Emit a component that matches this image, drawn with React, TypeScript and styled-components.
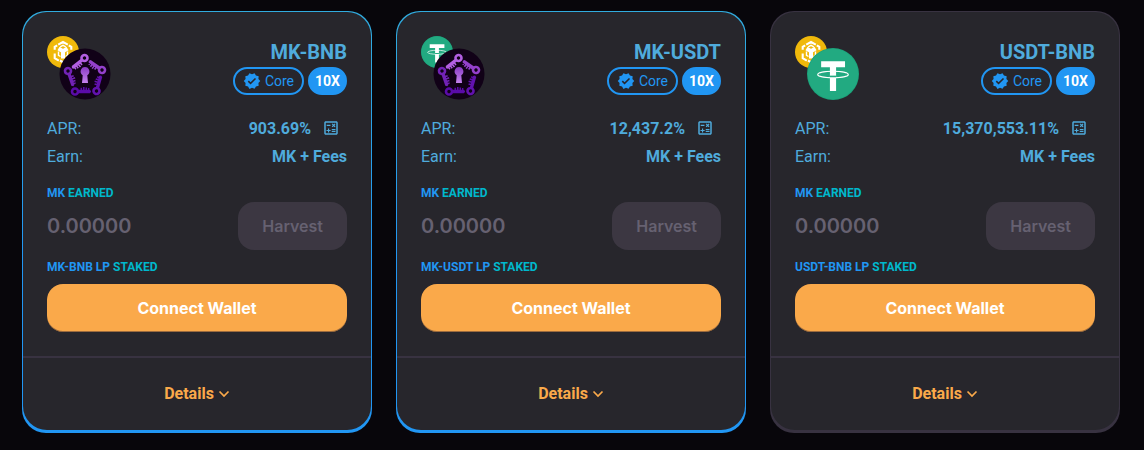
import React from "react";
import styled, { createGlobalStyle } from "styled-components";
import { MdVerified, MdOutlineCalculate } from "react-icons/md";

const GlobalStyle = createGlobalStyle`
  *, *::before, *::after { box-sizing: border-box; }
  body {
    margin: 0;
    background: #08060b;
    font-family: Roboto, "Noto Sans", sans-serif;
    font-size: 16px;
    line-height: 24px;
    color: #4fabdc;
  }
`;

const Grid = styled.main`
  display: grid;
  grid-template-columns: repeat(3, minmax(0, 1fr));
  gap: 24px;
  padding: 11px 24px 16px 22px;
`;

const CardFrame = styled.article<{ $highlight: boolean }>`
  padding: 1px 1px 3px;
  border-radius: 24px;
  background: ${(p) => (p.$highlight ? "linear-gradient(180deg, #31acdf, #2196f3 60%)" : "#383241")};
`;

const CardInner = styled.div`
  border-radius: 24px;
  background: #27262c;
`;

const CardBody = styled.div`
  padding: 24px;
`;

const Header = styled.header`
  display: flex;
  justify-content: space-between;
  align-items: center;
  height: 64px;
  margin-bottom: 16px;
`;

const TokenPair = styled.div`
  position: relative;
  width: 64px;
  height: 64px;
`;

const SecondaryToken = styled.svg`
  position: absolute;
  top: 0;
  left: 0;
  width: 32px;
  height: 32px;
`;

const PrimaryToken = styled.svg`
  position: absolute;
  right: 0;
  bottom: 0;
  width: 52px;
  height: 52px;
`;

const Titles = styled.div`
  display: flex;
  flex-direction: column;
  align-items: flex-end;
  gap: 4px;
`;

const PairName = styled.h2`
  margin: 0;
  font-size: 20px;
  line-height: 22px;
  font-weight: 700;
`;

const Tags = styled.div`
  display: flex;
  gap: 4px;
`;

const Tag = styled.span<{ $filled?: boolean }>`
  display: inline-flex;
  align-items: center;
  gap: 4px;
  height: 28px;
  padding: 0 ${(p) => (p.$filled ? 5 : 8)}px;
  border: 2px solid #2196f3;
  border-radius: 16px;
  background: ${(p) => (p.$filled ? "#2196f3" : "transparent")};
  color: ${(p) => (p.$filled ? "#ffffff" : "#2196f3")};
  font-size: 14px;
  font-weight: ${(p) => (p.$filled ? 700 : 400)};
`;

const Stats = styled.dl`
  display: grid;
  gap: 4px;
  margin: 0 0 16px;
`;

const Stat = styled.div`
  display: flex;
  justify-content: space-between;
  height: 24px;
  line-height: 26px;
`;

const StatName = styled.dt`
  margin: 0;
`;

const StatValue = styled.dd`
  display: flex;
  gap: 4px;
  margin: 0;
  font-weight: 700;
`;

const IconButton = styled.button`
  display: flex;
  align-items: center;
  justify-content: center;
  width: 32px;
  height: 24px;
  padding: 0;
  border: 0;
  background: none;
  color: inherit;
`;

const Caption = styled.p`
  margin: 0;
  font-size: 12px;
  line-height: 18px;
  font-weight: 700;
  color: #00b8cc;
  text-transform: uppercase;
`;

const CaptionToken = styled.span`
  color: #2196f3;
`;

const HarvestRow = styled.div`
  display: flex;
  align-items: center;
  justify-content: space-between;
  margin-bottom: 8px;
`;

const Earned = styled.span`
  font-family: Inter, sans-serif;
  font-size: 20px;
  line-height: 26px;
  font-weight: 600;
  color: #666171;
`;

const Button = styled.button`
  height: 48px;
  padding: 0 24px;
  border: 0;
  border-radius: 16px;
  font: 700 16px/26px Inter, "Noto Sans", sans-serif;
`;

const HarvestButton = styled(Button)`
  background: #3c3742;
  color: #666171;
  font-weight: 600;
`;

const ConnectButton = styled(Button)`
  width: 100%;
  margin-top: 8px;
  display: block;
  background: #faa94a;
  box-shadow: inset 0 -1px 0 rgba(14, 14, 44, 0.4);
  color: #ffffff;
`;

const Footer = styled.footer`
  display: flex;
  justify-content: center;
  padding: 24px;
  border-top: 2px solid #383241;
`;

const DetailsButton = styled.button`
  display: flex;
  align-items: center;
  gap: 4px;
  padding: 0;
  border: 0;
  background: none;
  color: #faa94a;
  font: 700 16px/24px Roboto, "Noto Sans", sans-serif;
`;

type Token = "BNB" | "MK" | "USDT";

const BnbArt = () => (
  <>
    <circle cx="16" cy="16" r="16" fill="#f0b90b" />
    <g fill="none" stroke="#fff" strokeWidth="2.100">
      <path d="M11.200 8.700 16 6l4.800 2.700M7.700 13.800v-3l2.500-1.500M24.300 13.800v-3l-2.500-1.500M7.700 17.500v4.700l4.100 2.400M24.300 17.500v4.700l-4.100 2.400M13 24.500l3 1.700 3-1.700" />
      <path d="M11.500 12.500 16 15.200l4.500-2.700M16 15v7.500" strokeWidth="4" />
      <path d="M13.200 10.800 16 9.300l2.800 1.500M11.500 15.500v3.800l2 1.200M20.500 15.500v3.800l-2 1.200" strokeWidth="1.400" />
    </g>
  </>
);

const UsdtArt = () => (
  <>
    <circle cx="16" cy="16" r="16" fill="#1ba27a" />
    <circle cx="16" cy="16" r="15.500" fill="#22aa81" />
    <path d="M8.700 8.200h14.700v3.700h-5.500v14.500h-3.800V11.900H8.700z" fill="#fff" />
    <ellipse cx="16" cy="16.300" rx="9.400" ry="2" fill="none" stroke="#fff" strokeWidth=".7" />
    <path d="M14.100 17h3.800v1h-3.800z" fill="#22aa81" />
  </>
);

const keys = [
  { x: 25.5, y: 10, angle: 141, color: "#b35fe2" },
  { x: 43, y: 22, angle: 215, color: "#9440cc" },
  { x: 37.5, y: 43, angle: 286, color: "#6212ae" },
  { x: 16, y: 43.5, angle: 0, color: "#5a0ba8" },
  { x: 9, y: 23, angle: 71, color: "#7222b6" },
];

const MkArt = () => (
  <>
    <defs>
      <linearGradient id="keyhole" x1="0" y1="0" x2="0" y2="1">
        <stop offset="0" stopColor="#8a3cc4" />
        <stop offset="1" stopColor="#c583ee" />
      </linearGradient>
    </defs>
    <circle cx="26" cy="26" r="25.500" fill="#110117" />
    {keys.map((k) => (
      <g key={k.angle} transform={`translate(${k.x} ${k.y}) rotate(${k.angle})`}>
        <circle r="3" fill="none" stroke={k.color} strokeWidth="2.600" />
        <path d="M3.500-1.700h11.500l1.200 1.700-1.200 1.700H3.500zM5.500-3.800h1.600v3H5.500zM8-4.500h1.600v4H8zM10.500-4h1.600v4h-1.600zM13-3.400h1.400v3H13z" fill={k.color} />
      </g>
    ))}
    <path d="M26 19a4.500 4.500 0 0 1 2.300 8.300L29 35h-6l.7-7.700A4.500 4.500 0 0 1 26 19z" fill="url(#keyhole)" />
  </>
);

const art: Record<Token, { box: string; Art: React.FC }> = {
  BNB: { box: "0 0 32 32", Art: BnbArt },
  USDT: { box: "0 0 32 32", Art: UsdtArt },
  MK: { box: "0 0 52 52", Art: MkArt },
};

interface Farm {
  name: string;
  primary: Token;
  secondary: Token;
  apr: string;
  highlight: boolean;
}

const farms: Farm[] = [
  { name: "MK-BNB", primary: "MK", secondary: "BNB", apr: "903.69%", highlight: true },
  { name: "MK-USDT", primary: "MK", secondary: "USDT", apr: "12,437.2%", highlight: true },
  { name: "USDT-BNB", primary: "USDT", secondary: "BNB", apr: "15,370,553.11%", highlight: false },
];

const FarmCard = ({ farm }: { farm: Farm }) => {
  const primary = art[farm.primary];
  const secondary = art[farm.secondary];
  return (
    <CardFrame $highlight={farm.highlight}>
      <CardInner>
        <CardBody>
          <Header>
            <TokenPair>
              <SecondaryToken viewBox={secondary.box} aria-hidden="true"><secondary.Art /></SecondaryToken>
              <PrimaryToken viewBox={primary.box} aria-hidden="true"><primary.Art /></PrimaryToken>
            </TokenPair>
            <Titles>
              <PairName>{farm.name}</PairName>
              <Tags>
                <Tag><MdVerified size={18} />Core</Tag>
                <Tag $filled>10X</Tag>
              </Tags>
            </Titles>
          </Header>
          <Stats>
            <Stat>
              <StatName>APR:</StatName>
              <StatValue>
                {farm.apr}
                <IconButton aria-label="Open ROI calculator"><MdOutlineCalculate size={18} /></IconButton>
              </StatValue>
            </Stat>
            <Stat>
              <StatName>Earn:</StatName>
              <StatValue>MK + Fees</StatValue>
            </Stat>
          </Stats>
          <Caption><CaptionToken>MK</CaptionToken> Earned</Caption>
          <HarvestRow>
            <Earned>0.00000</Earned>
            <HarvestButton disabled>Harvest</HarvestButton>
          </HarvestRow>
          <Caption><CaptionToken>{farm.name} LP</CaptionToken> Staked</Caption>
          <ConnectButton>Connect Wallet</ConnectButton>
        </CardBody>
        <Footer>
          <DetailsButton aria-expanded="false">
            Details
            <svg width="12" height="12" viewBox="0 0 12 12" fill="none" stroke="currentColor" strokeWidth="1.700" aria-hidden="true">
              <path d="M1.500 3.500 6 8l4.500-4.500" />
            </svg>
          </DetailsButton>
        </Footer>
      </CardInner>
    </CardFrame>
  );
};

export default function App() {
  return (
    <>
      <GlobalStyle />
      <Grid>
        {farms.map((farm) => <FarmCard key={farm.name} farm={farm} />)}
      </Grid>
    </>
  );
}
